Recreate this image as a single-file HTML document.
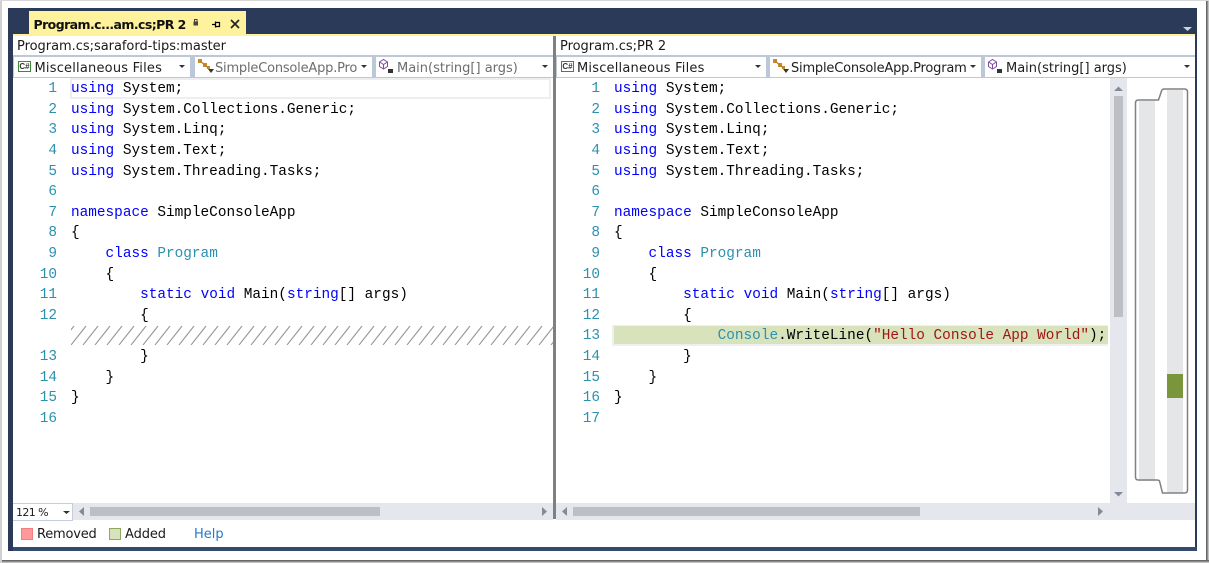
<!DOCTYPE html>
<html><head><meta charset="utf-8">
<style>
html,body{margin:0;padding:0;background:#fff;}
body{width:1209px;height:563px;position:relative;overflow:hidden;font-family:"Liberation Sans",sans-serif;color:#1a1a1a;}
.a{position:absolute;}
.t{position:absolute;white-space:pre;font-family:"DejaVu Sans",sans-serif;font-size:13px;line-height:20px;}
.combo{position:absolute;top:57px;height:20px;background:#fff;overflow:hidden;}
.combo span{position:absolute;top:1.5px;left:21px;font-family:"DejaVu Sans",sans-serif;font-size:13px;line-height:20px;white-space:pre;color:#1e1e1e;}
.combo.g span{color:#6d6d6d;}
.combo i{position:absolute;right:0;top:0;width:15px;height:20px;background:#fff;}
.combo i:after{content:"";position:absolute;left:4px;top:8px;border-left:3.5px solid transparent;border-right:3.5px solid transparent;border-top:3.5px solid #333;}
pre{position:absolute;margin:0;font-family:"Liberation Mono",monospace;font-size:14.4px;line-height:20.6px;color:#000;}
.n{color:#2B91AF;text-align:right;width:30px;}
b{font-weight:normal;color:#0000FF;}
u{text-decoration:none;color:#2B91AF;}
s{text-decoration:none;color:#A31515;}
.cs{position:absolute;left:4px;top:4px;width:11px;height:9px;border:1px solid #388a34;background:#fff;font:bold 8px/9px "Liberation Sans",sans-serif;color:#333;text-align:center;}
svg{position:absolute;overflow:visible;}
</style></head><body>
<!-- outer frame -->
<div class="a" style="left:0;top:0;width:2px;height:563px;background:#d0d0d0"></div>
<div class="a" style="left:0;top:0;width:1209px;height:1px;background:#d8d8d8"></div>
<div class="a" style="left:1206px;top:1px;width:3px;height:562px;background:linear-gradient(90deg,#555,#999 60%,#ddd)"></div>
<div class="a" style="left:2px;top:560px;width:1207px;height:3px;background:linear-gradient(180deg,#555,#999 60%,#ddd)"></div>
<div class="a" style="left:8px;top:8px;width:1189px;height:543px;background:#2A3A58"></div>
<div class="a" style="left:13px;top:547px;width:1184px;height:4px;background:#344A6C"></div>
<div class="a" style="left:13px;top:34px;width:1182px;height:513px;background:#fff"></div>
<div class="a" style="left:13px;top:34px;width:1182px;height:2px;background:#FFF29D"></div>
<!-- tab -->
<div class="a" style="left:29px;top:11px;width:217px;height:24px;background:#FFF29D"></div>
<div class="t" style="left:33.5px;top:15px;line-height:20px;font-size:12.5px;font-weight:bold;letter-spacing:-.57px;color:#111;">Program.c...am.cs;PR 2</div>
<svg style="left:0;top:0" width="1209" height="563">
<rect x="193.500" y="21.500" width="4.500" height="4" fill="#444"/><path d="M194.500 21.500v-2h2.500v2" fill="none" stroke="#444"/>
<path d="M212 24.500h3.500M215.500 21.500v6M215.500 22.500h4v4h-4" fill="none" stroke="#000" stroke-width="1.2"/>
<path d="M231 20l8 8M239 20l-8 8" stroke="#222" stroke-width="1.7"/>
<path d="M1183 27h9l-4.500 4z" fill="#ccd3df"/>
</svg>
<!-- file titles -->
<div class="t" style="left:17px;top:37px;letter-spacing:-.03px">Program.cs;saraford-tips:master</div>
<div class="t" style="left:560px;top:37px;letter-spacing:-.03px">Program.cs;PR 2</div>
<!-- combo bar -->
<div class="a" style="left:13px;top:55px;width:1182px;height:23px;background:#BCC7D8"></div>
<div class="combo" style="left:14px;width:176px"><div class="cs">C#</div><span style="left:20.500px;letter-spacing:.2px">Miscellaneous Files</span><i></i></div>
<div class="combo g" style="left:195px;width:177px"><span style="left:20px;letter-spacing:-.2px">SimpleConsoleApp.Program</span><i></i></div>
<div class="combo g" style="left:376px;width:177px"><span style="left:21px;">Main(string[] args)</span><i></i></div>
<div class="combo" style="left:557px;width:209px"><div class="cs">C#</div><span style="left:20px;letter-spacing:.2px">Miscellaneous Files</span><i></i></div>
<div class="combo" style="left:770px;width:211px"><span style="left:21px;letter-spacing:-.2px">SimpleConsoleApp.Program</span><i></i></div>
<div class="combo" style="left:985px;width:210px"><span style="left:21px;">Main(string[] args)</span><i></i></div>
<svg style="left:0;top:0" width="1209" height="563">
<g fill="#C98A2E"><rect x="198" y="59" width="4" height="4"/><rect x="203" y="63" width="4" height="4"/><rect x="207" y="66" width="3" height="3"/></g>
<path d="M200 61l5 4 3 3" fill="none" stroke="#C27D1A" stroke-width="1.2"/><path d="M208 69h6l-3 4z" fill="#333"/>
<g fill="#C98A2E"><rect x="773" y="59" width="4" height="4"/><rect x="778" y="63" width="4" height="4"/><rect x="782" y="66" width="3" height="3"/></g>
<path d="M775 61l5 4 3 3" fill="none" stroke="#C27D1A" stroke-width="1.2"/><path d="M783 69h6l-3 4z" fill="#333"/>
<g fill="none" stroke="#7B4FA0" stroke-width="1"><path d="M379.500 62l4-2.500 4 2.500v4.500l-4 2.500-4-2.500zM379.500 62l4 2.500 4-2.500M383.500 64.500v4.500"/>
<path d="M988.500 62l4-2.500 4 2.500v4.500l-4 2.500-4-2.500zM988.500 62l4 2.500 4-2.500M992.500 64.500v4.500"/></g>
<rect x="388" y="69" width="5" height="4" fill="#333"/><rect x="997" y="69" width="5" height="4" fill="#333"/>
</svg>
<!-- splitter -->
<div class="a" style="left:553px;top:36px;width:3px;height:483px;background:#808080"></div>
<!-- line 1 highlight -->
<div class="a" style="left:70px;top:78px;width:477px;height:17px;border:2px solid #EEEEF2"></div>
<!-- hatch -->
<svg style="left:71px;top:326px;overflow:hidden" width="482" height="19">
<defs><pattern id="h" width="12" height="19" patternUnits="userSpaceOnUse"><path d="M-12 19L3 0M0 19L15 0M12 19L27 0" stroke="#969696" stroke-width="1.1" fill="none"/></pattern></defs>
<rect width="482" height="19" fill="url(#h)"/></svg>
<!-- added line -->
<div class="a" style="left:612px;top:325px;width:496px;height:21px;background:#EFEFF2"></div>
<div class="a" style="left:614px;top:326px;width:494px;height:18px;background:#D8E3BC"></div>
<!-- left code -->
<pre class="n" style="left:27px;top:79.300px">1
2
3
4
5
6
7
8
9
10
11
12

13
14
15
16</pre>
<pre style="left:71px;top:79.300px"><b>using</b> System;
<b>using</b> System.Collections.Generic;
<b>using</b> System.Linq;
<b>using</b> System.Text;
<b>using</b> System.Threading.Tasks;

<b>namespace</b> SimpleConsoleApp
{
    <b>class</b> <u>Program</u>
    {
        <b>static</b> <b>void</b> Main(<b>string</b>[] args)
        {

        }
    }
}</pre>
<!-- right code -->
<pre class="n" style="left:570px;top:79.300px">1
2
3
4
5
6
7
8
9
10
11
12
13
14
15
16
17</pre>
<pre style="left:614px;top:79.300px;width:494px;overflow:hidden"><b>using</b> System;
<b>using</b> System.Collections.Generic;
<b>using</b> System.Linq;
<b>using</b> System.Text;
<b>using</b> System.Threading.Tasks;

<b>namespace</b> SimpleConsoleApp
{
    <b>class</b> <u>Program</u>
    {
        <b>static</b> <b>void</b> Main(<b>string</b>[] args)
        {
            <u>Console</u>.WriteLine(<s>"Hello Console App World"</s>);
        }
    }
}</pre>
<!-- scrollbars -->
<div class="a" style="left:1110px;top:78px;width:17px;height:425px;background:#E6E7ED"></div>
<div class="a" style="left:1114px;top:96px;width:9px;height:221px;background:#BEBFC5"></div>
<div class="a" style="left:13px;top:503px;width:540px;height:17px;background:#E6E7ED"></div>
<div class="a" style="left:556px;top:503px;width:639px;height:17px;background:#E6E7ED"></div>
<div class="a" style="left:90px;top:507px;width:290px;height:9px;background:#BEBFC5"></div>
<div class="a" style="left:573px;top:507px;width:347px;height:9px;background:#BEBFC5"></div>
<!-- zoom -->
<div class="a" style="left:13px;top:503px;width:59px;height:16px;background:#fff;border:1px solid #C5CDDD;border-left:0;"></div>
<div class="t" style="left:16px;top:503px;font-size:11px;line-height:20px;letter-spacing:-.6px">121 %</div>
<svg style="left:0;top:0" width="1209" height="563">
<path d="M63 511h7l-3.500 3z" fill="#333"/>
<path d="M84 507v9l-5-4.500zM542 507v9l5-4.500zM567 507v9l-5-4.500zM1098 507v9l5-4.500zM1114 91h9l-4.500-4.500zM1114 492h9l-4.500 4.500z" fill="#868999"/>
<!-- minimap -->
<rect x="1139" y="101" width="16" height="380" fill="#E5E6E8"/>
<rect x="1167" y="90" width="16" height="403" fill="#E5E6E8"/>
<rect x="1167" y="374" width="16" height="24" fill="#7A963C"/>
<path d="M1135.500 103q0-3 3-3h20l3-9q.5-2 3-2h20q3 0 3 3v398q0 3-3 3h-22l-3-12q-.5-1-3-1h-18q-3 0-3-3z" fill="none" stroke="#808080" stroke-width="1.500" />
<!-- legend -->
<rect x="21.500" y="528.500" width="11" height="11" fill="#FF9999" stroke="#F27F7F"/>
<rect x="109.500" y="528.500" width="11" height="11" fill="#D8E3BC" stroke="#8FA860"/>
</svg>
<div class="t" style="left:37px;top:525px;letter-spacing:-.2px">Removed</div>
<div class="t" style="left:125px;top:525px;letter-spacing:-.1px">Added</div>
<div class="t" style="left:194px;top:525px;color:#1F7AD0">Help</div>
</body></html>
